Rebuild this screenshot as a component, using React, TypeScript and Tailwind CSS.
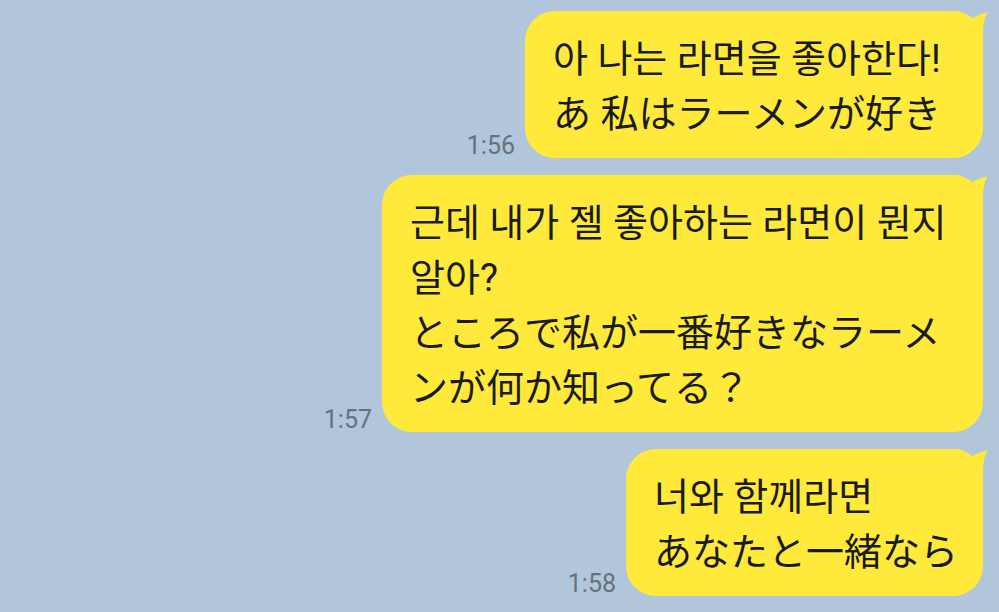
import React from "react";

function Tail() {
  return (
    <svg
      className="absolute top-0 right-[-6px]"
      width="40"
      height="40"
      viewBox="0 0 40 40"
    >
      <path
        d="M0 0 H6 Q16 0 21 9 Q28 3 38.5 1.5 Q34 9 34 23 V40 H0 Z"
        fill="#ffea3b"
      />
    </svg>
  );
}

function Message({
  time,
  width,
  lines,
}: {
  time: string;
  width: string;
  lines: string[];
}) {
  return (
    <div className="flex items-end gap-[10px]">
      <span
        className="text-[25px] leading-none text-[#66717b]"
        style={{ fontFamily: "Roboto, 'Liberation Sans', sans-serif" }}
      >
        {time}
      </span>
      <div
        className={`relative rounded-[30px] bg-[#ffea3b] pl-[28px] pr-[16px] pt-[21px] pb-[16px] text-[38px] leading-[55px] text-[#1b1b1b] whitespace-nowrap ${width}`}
        style={{ fontFamily: "Roboto, 'Noto Sans CJK JP', 'Noto Sans CJK KR', sans-serif" }}
      >
        <Tail />
        {lines.map((l, i) => (
          <div key={i} className="relative">
            {l}
          </div>
        ))}
      </div>
    </div>
  );
}

export default function App() {
  return (
    <div className="min-h-[612px] w-full bg-[#b1c6da] pt-[11px] pr-[16px] flex flex-col items-end gap-[17px] overflow-hidden">
      <Message
        time="1:56"
        width="w-[458px]"
        lines={["아 나는 라면을 좋아한다!", "あ 私はラーメンが好き"]}
      />
      <Message
        time="1:57"
        width="w-[601px]"
        lines={[
          "근데 내가 젤 좋아하는 라면이 뭔지",
          "알아?",
          "ところで私が一番好きなラーメ",
          "ンが何か知ってる？",
        ]}
      />
      <Message
        time="1:58"
        width="w-[357px]"
        lines={["너와 함께라면", "あなたと一緒なら"]}
      />
    </div>
  );
}
